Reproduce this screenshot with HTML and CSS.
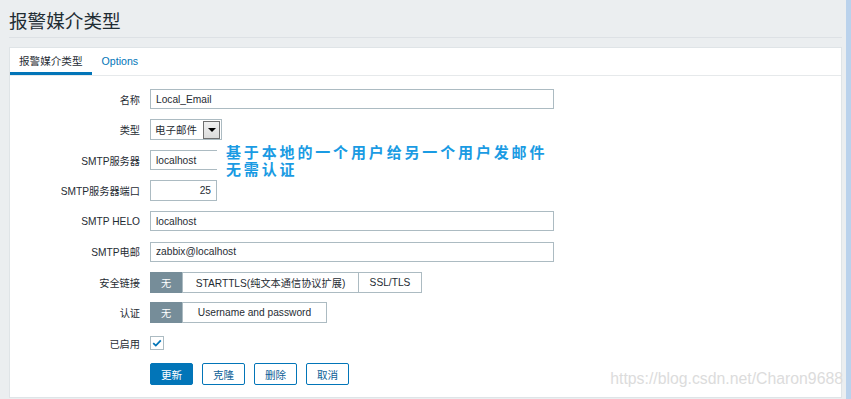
FILE: index.html
```html
<!DOCTYPE html>
<html lang="zh-CN">
<head>
<meta charset="utf-8">
<title>报警媒介类型</title>
<link rel="stylesheet" href="styles.css">
</head>
<body>
<div class="page">
  <div class="main">
    <div class="header"><h1 class="title">报警媒介类型</h1></div>
    <div class="panel">
      <ul class="tabs">
        <li class="tab tab-active">报警媒介类型</li>
        <li class="tab"><a class="tab-link">Options</a></li>
      </ul>
      <form class="form">
        <div class="row">
          <label class="label">名称</label>
          <input class="input input-wide" value="Local_Email" readonly>
        </div>
        <div class="row">
          <label class="label">类型</label>
          <div class="select"><span class="select-text">电子邮件</span><span class="select-arrow"></span></div>
        </div>
        <div class="row row-note">
          <label class="label">SMTP服务器</label>
          <input class="input input-short" value="localhost" readonly>
          <div class="note">基于本地的一个用户给另一个用户发邮件<br>无需认证</div>
        </div>
        <div class="row">
          <label class="label">SMTP服务器端口</label>
          <input class="input input-port" value="25" readonly>
        </div>
        <div class="row">
          <label class="label">SMTP HELO</label>
          <input class="input input-wide" value="localhost" readonly>
        </div>
        <div class="row">
          <label class="label">SMTP电邮</label>
          <input class="input input-wide" value="zabbix@localhost" readonly>
        </div>
        <div class="row">
          <label class="label">安全链接</label>
          <div class="radio">
            <span class="seg seg-on seg-none">无</span>
            <span class="seg seg-starttls">STARTTLS(纯文本通信协议扩展)</span>
            <span class="seg seg-ssl">SSL/TLS</span>
          </div>
        </div>
        <div class="row">
          <label class="label">认证</label>
          <div class="radio">
            <span class="seg seg-on seg-none">无</span>
            <span class="seg seg-user">Username and password</span>
          </div>
        </div>
        <div class="row">
          <label class="label">已启用</label>
          <span class="checkbox"><svg width="12" height="12" viewBox="0 0 12 12"><path d="M2.2 6.2 L4.8 8.6 L9.8 3.4" fill="none" stroke="#0275b8" stroke-width="1.8"/></svg></span>
        </div>
        <div class="row row-buttons">
          <span class="label"></span>
          <div class="buttons">
            <button type="button" class="btn btn-main">更新</button>
            <button type="button" class="btn">克隆</button>
            <button type="button" class="btn">删除</button>
            <button type="button" class="btn">取消</button>
          </div>
        </div>
      </form>
      <div class="watermark">https://blog.csdn.net/Charon9688</div>
    </div>
  </div>
  <div class="edge"></div>
</div>
</body>
</html>
```

FILE: styles.css
```css
html, body {
  margin: 0;
  padding: 0;
}
body {
  background: #ebeef0;
  color: #1f2c33;
  font-family: "Liberation Sans", Arial, "Noto Sans CJK SC", sans-serif;
  font-size: 10.2px;
  overflow: hidden;
}
.page {
  display: flex;
  height: 399px;
}
.main {
  flex: 1;
  padding: 0 4px 0 9px;
}
.edge {
  width: 5px;
  background: #bad2ec;
}
.header {
  height: 38px;
  box-sizing: border-box;
  padding-top: 2px;
  border-bottom: 1px solid #dde1e5;
}
.title {
  margin: 0;
  font-family: "Noto Sans CJK SC", sans-serif;
  font-weight: 400;
  font-size: 18.6px;
  line-height: 35px;
  color: #1f2c33;
}
.panel {
  position: relative;
  margin-top: 9px;
  background: #fff;
  border: 1px solid #dfe4e7;
  height: 349px;
}
.tabs {
  list-style: none;
  margin: 0;
  padding: 0;
  display: flex;
  height: 27px;
  border-bottom: 1px solid #e6e9eb;
}
.tab {
  padding: 0 9px;
  line-height: 27px;
  font-size: 10.6px;
  color: #1f2c33;
}
.tab-active {
  box-shadow: inset 0 -3px 0 #0275b8;
}
.tab-link {
  color: #0275b8;
  padding-left: 1px;
}
.form {
  margin: 0;
  padding: 12.5px 0 0;
  display: flex;
  flex-direction: column;
  gap: 9.5px;
}
.row {
  height: 21px;
  display: flex;
  align-items: center;
  gap: 10px;
}
.row-note {
  position: relative;
}
.row-buttons {
  height: 22px;
}
.label {
  width: 130px;
  flex: none;
  text-align: right;
  box-sizing: border-box;
  padding-right: 0;
}
.input {
  box-sizing: border-box;
  height: 20px;
  border: 1px solid #acbbc2;
  padding: 0 5px;
  margin: 0;
  font: inherit;
  color: #1f2c33;
  background: #fff;
  outline: none;
}
.input-wide {
  width: 404px;
}
.input-short {
  width: 67px;
  border-right: none;
}
.input-port {
  width: 67px;
  height: 21px;
  text-align: right;
}
.select {
  box-sizing: border-box;
  width: 72px;
  height: 21px;
  border: 1px solid #acbbc2;
  display: flex;
  align-items: center;
  justify-content: space-between;
}
.select-text {
  padding-left: 4px;
  font-size: 10.5px;
}
.select-arrow {
  box-sizing: border-box;
  width: 17px;
  height: 18px;
  margin-right: 1px;
  border: 1px solid #6f6f6f;
  background: linear-gradient(#f0f0f0, #dcdcdc);
  display: flex;
  align-items: center;
  justify-content: center;
}
.select-arrow::after {
  content: "";
  border-left: 4px solid transparent;
  border-right: 4px solid transparent;
  border-top: 4px solid #000;
}
.note {
  position: absolute;
  left: 207px;
  top: -9px;
  width: 345px;
  height: 39px;
  background: #fff;
  color: #1a9be3;
  font-family: "Noto Sans CJK SC", sans-serif;
  font-weight: 700;
  font-size: 15px;
  line-height: 17.5px;
  letter-spacing: 2.85px;
  padding: 2px 0 0 9px;
  box-sizing: border-box;
}
.radio {
  display: flex;
  height: 21px;
  box-sizing: border-box;
  border: 1px solid #acbbc2;
}
.seg {
  box-sizing: border-box;
  display: flex;
  align-items: center;
  justify-content: center;
  border-left: 1px solid #acbbc2;
  height: 19px;
}
.seg:first-child {
  border-left: none;
}
.seg-on {
  background: #768d99;
  color: #fff;
  margin: -1px 0 -1px -1px;
  height: 21px;
}
.seg-none {
  width: 32px;
}
.seg-starttls {
  width: 176px;
}
.seg-ssl {
  width: 63px;
}
.seg-user {
  width: 144px;
}
.checkbox {
  box-sizing: border-box;
  width: 14px;
  height: 14px;
  border: 1px solid #acbbc2;
  display: flex;
  align-items: center;
  justify-content: center;
}
.buttons {
  display: flex;
  gap: 9px;
}
.btn {
  box-sizing: border-box;
  width: 43px;
  height: 22px;
  padding: 0;
  border: 1px solid #0275b8;
  border-radius: 2px;
  background: #fff;
  color: #0b5e96;
  font-family: "Noto Sans CJK SC", sans-serif;
  font-size: 10.6px;
}
.btn-main {
  background: #0275b8;
  color: #fff;
}
.watermark {
  position: absolute;
  right: -2px;
  bottom: 9px;
  font-family: "Liberation Sans", Arial, sans-serif;
  font-size: 15.8px;
  color: #dcdcdc;
  white-space: nowrap;
}
```
